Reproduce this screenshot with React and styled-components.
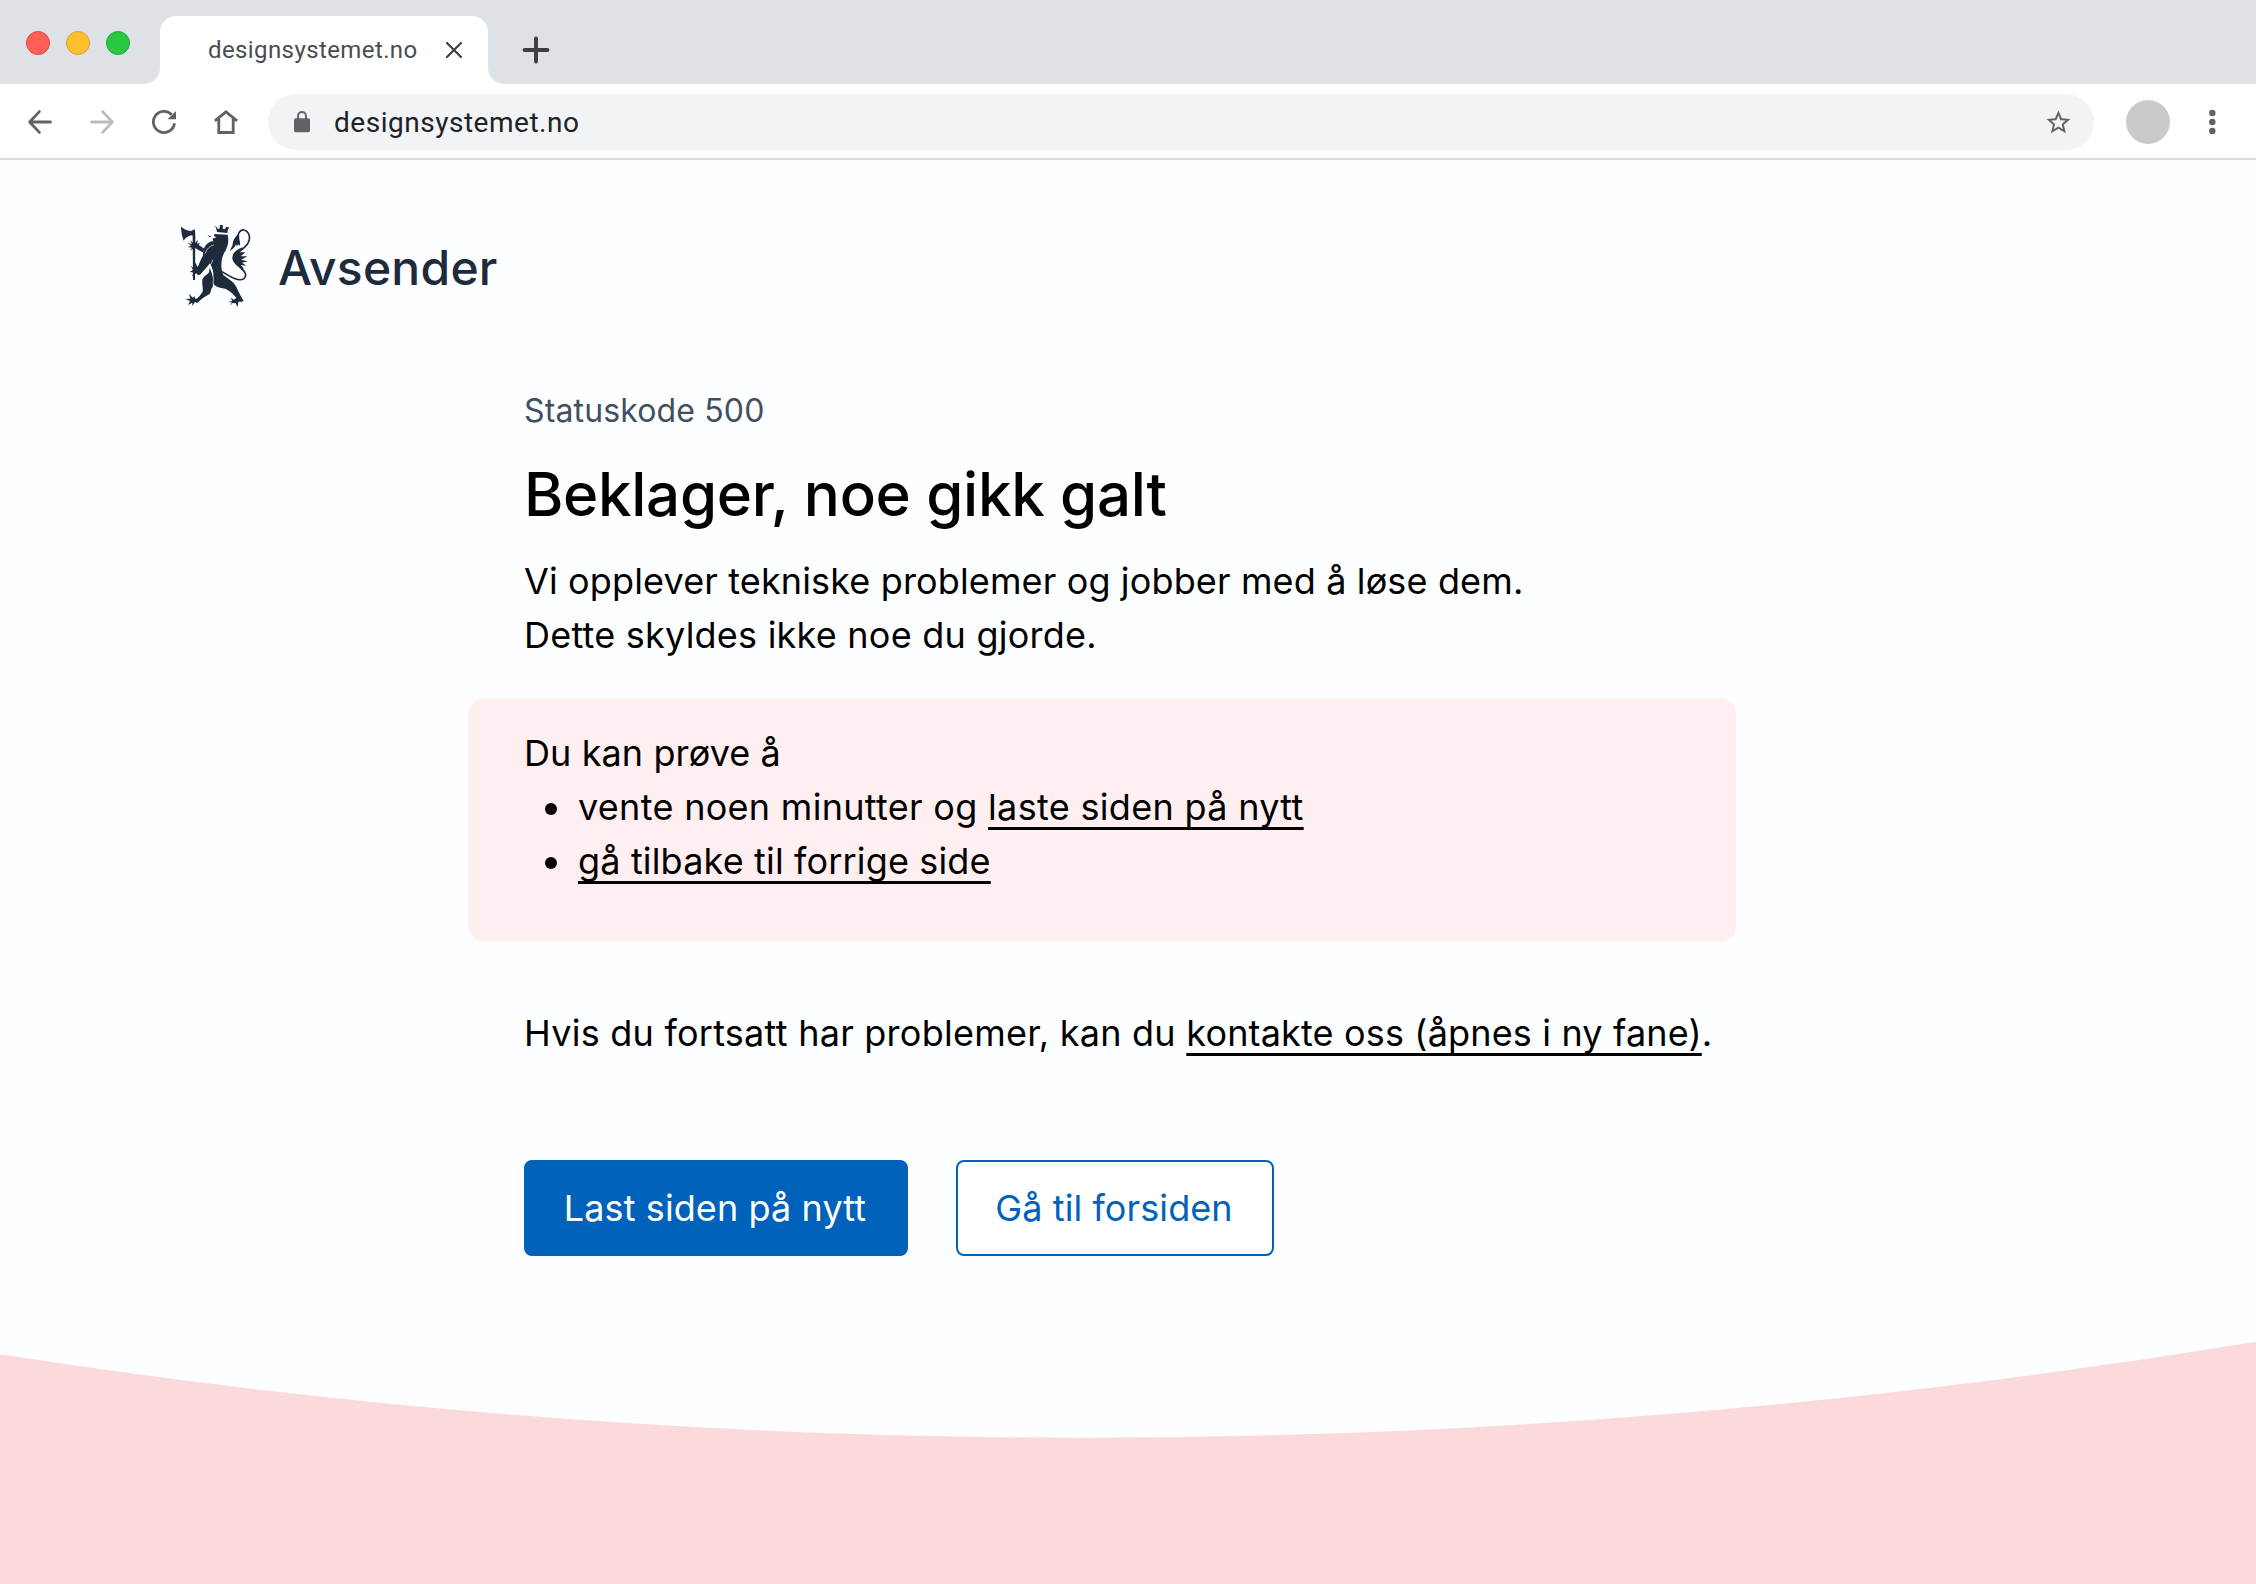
import React from 'react';
import styled, { createGlobalStyle } from 'styled-components';

const GlobalStyle = createGlobalStyle`
  *, *::before, *::after { box-sizing: border-box; }
  body { margin: 0; background: #fdfeff; }
`;

const Window = styled.div`
  display: flex;
  flex-direction: column;
  width: 2256px;
  height: 1584px;
  overflow: hidden;
  background: #fdfeff;
`;

const TabStrip = styled.div`
  display: flex;
  align-items: flex-end;
  height: 84px;
  background: #dee1e6;
`;

const WindowControls = styled.div`
  display: flex;
  gap: 16px;
  align-self: flex-start;
  width: 160px;
  padding: 31px 0 0 26px;
`;

const Control = styled.span`
  width: 24px;
  height: 24px;
  border: 1px solid ${(p) => p.$edge};
  border-radius: 50%;
  background: ${(p) => p.$fill};
`;

const Tab = styled.div`
  position: relative;
  display: flex;
  align-items: center;
  width: 328px;
  height: 68px;
  padding: 0 26px 2px 48px;
  border-radius: 16px 16px 0 0;
  background: #fff;

  &::before,
  &::after {
    content: '';
    position: absolute;
    bottom: 0;
    width: 16px;
    height: 16px;
  }
  &::before {
    right: 100%;
    background: radial-gradient(circle at 0 0, transparent 15.5px, #fff 16.5px);
  }
  &::after {
    left: 100%;
    background: radial-gradient(circle at 100% 0, transparent 15.5px, #fff 16.5px);
  }
`;

const TabTitle = styled.span`
  flex: 1;
  padding-top: 2px;
  font: 400 24px/32px Roboto, sans-serif;
  letter-spacing: 0.4px;
  color: #494c50;
`;

const NewTab = styled.div`
  display: flex;
  margin: 0 0 20px 34px;
`;

const Toolbar = styled.div`
  display: flex;
  align-items: center;
  height: 76px;
  padding: 2px 28px 0;
  border-bottom: 2px solid #dad9df;
  background: #fff;
`;

const NavButtons = styled.div`
  display: flex;
  gap: 38px;
  width: 240px;
`;

const Omnibox = styled.div`
  display: flex;
  align-items: center;
  width: 1826px;
  height: 56px;
  padding: 0 21.5px 0 25px;
  border-radius: 28px;
  background: #f1f3f4;
`;

const Address = styled.span`
  flex: 1;
  padding: 2px 0 0 23px;
  font: 400 28px/40px Roboto, sans-serif;
  letter-spacing: 0.52px;
  color: #202124;
`;

const Avatar = styled.span`
  width: 44px;
  height: 44px;
  margin: 0 38px 0 32px;
  border-radius: 50%;
  background: #cacaca;
`;

const Icon = styled.svg`
  display: block;
  flex: none;
  overflow: visible;
  fill: none;
  stroke: ${(p) => p.$color || '#5f6368'};
  stroke-width: ${(p) => p.$weight || 2.8};
`;

const SiteHeader = styled.header`
  display: flex;
  align-items: center;
  gap: 18px;
  padding: 55px 0 0 170px;
  color: #1e2b3c;
`;

const Crest = styled.svg`
  display: block;
  fill: #1e2b3c;
`;

const Sender = styled.span`
  padding-top: 5px;
  font: 500 48px/60px Inter, sans-serif;
  letter-spacing: 0.24px;
`;

const Main = styled.main`
  flex: 1;
  padding: 72px 0 0 524px;
  font: 400 36px/54px Inter, sans-serif;
  color: #000;
`;

const StatusCode = styled.p`
  margin: 0 0 20px;
  font-size: 32px;
  line-height: 48px;
  letter-spacing: 0.14px;
  color: #434f5f;
`;

const Title = styled.h1`
  margin: 0 0 21px;
  font-size: 60px;
  font-weight: 500;
  line-height: 78px;
  letter-spacing: -0.3px;
`;

const Text = styled.p`
  margin: 0;
  letter-spacing: ${(p) => p.$tracking || 0.16}px;
`;

const Card = styled.section`
  width: 1268px;
  height: 244px;
  margin: 36px 0 64px -56px;
  padding: 28px 56px;
  border-radius: 16px;
  background: #ffeff0;
`;

const Suggestions = styled.ul`
  margin: 0;
  padding: 0;
  list-style: none;
`;

const Suggestion = styled.li`
  display: flex;
  align-items: center;
  padding-left: 21px;
  letter-spacing: 0.3px;
  white-space: pre;

  &::before {
    content: '';
    width: 12px;
    height: 12px;
    margin: 3px 21px 0 0;
    border-radius: 50%;
    background: #000;
  }
`;

const Link = styled.a`
  color: inherit;
  letter-spacing: ${(p) => p.$tracking || 0.16}px;
  text-decoration: underline;
  text-decoration-thickness: 2.7px;
  text-underline-offset: 7px;
  text-decoration-skip-ink: none;
`;

const Actions = styled.div`
  display: flex;
  gap: 48px;
  margin-top: 100px;
`;

const Button = styled.button`
  width: ${(p) => p.$width}px;
  height: 96px;
  padding: 0 2px 0 0;
  border: 2px solid #0062ba;
  border-radius: 8px;
  background: ${(p) => (p.$primary ? '#0062ba' : '#fff')};
  color: ${(p) => (p.$primary ? '#fff' : '#0062ba')};
  font: inherit;
  letter-spacing: 0.1px;
`;

const Hill = styled.svg`
  display: block;
  flex: none;
  fill: #fcdadc;
`;

const Lion = () => (
  <Crest width="90" height="100" viewBox="0 0 270 300">
    <path d="M33 34C38 40 46 45 56 47L67 48V44L75 44 76 62 75 195H69L68 62 64 61C54 63 45 69 41 77 36 64 33 49 33 34Z" />
    <path d="M70 84 60 76 66 88 53 83 63 92 53 96 66 98 60 107 74 98 84 104 98 112 103 101 86 90 90 84 81 86 84 75 75 84Z" />
    <path d="M86 150C90 138 95 128 99 122 97 100 110 80 129 79L136 90 130 124C126 138 122 144 114 152 106 161 98 170 92 178L84 181 79 175 66 184 70 173 60 170 69 165 62 152 72 160 76 142 82 156Z" />
    <path d="M134 57 173 59C177 76 174 92 168 104 156 122 151 144 156 168L160 180C172 190 186 196 194 208 202 220 208 238 221 257L216 260 205 260 203 276 197 265 188 264 180 272 186 262 175 262 187 257 181 248 192 254 199 249C192 238 181 228 166 221 150 219 138 217 131 207 125 196 129 184 130 174 128 160 122 150 118 142L116 112 130 78 127 71 139 67 131 62Z" />
    <path d="M119 158 126 176C131 190 130 206 128 216 122 222 124 230 119 237 104 244 92 254 82 264L75 261 67 273 67 263 54 270 60 258 46 252 61 251 57 236 68 248 73 244 77 253C84 248 92 240 98 230 100 218 95 205 97 194 101 183 112 180 117 172Z" />
    <path d="M133 33 139 35 143 41 148 41 150 34 148 31 155 29 159 32 158 41 165 42 169 35 179 38 174 43 172 54 141 51 138 38Z" />
    <path d="M112 60 118 63 125 64 119 67Z" />
    <path d="M218 97C200 103 186 115 187 131 190 146 204 154 217 166L221 160 212 150 229 152 216 143 233 139 214 134 232 124 212 124 226 112 210 112Z" />
    <path d="M205 58C192 68 188 80 188 90L179 108C190 102 192 98 195 94L198 88 201 95 204 88 210 92C212 80 206 74 208 62Z" />
    <path
      d="M203 66C206 50 214 44 222 45 234 48 240 60 238 73 235 92 222 98 210 108M216 162C228 172 230 184 222 191 208 200 188 190 156 170"
      fill="none"
      stroke="#1e2b3c"
      strokeWidth="5"
    />
    <path
      d="M105 116C110 102 120 92 132 90M129 134C124 146 118 156 108 166M120 152C126 168 133 182 129 206"
      fill="none"
      stroke="#fdfeff"
      strokeWidth="2"
    />
  </Crest>
);

export default function App() {
  return (
    <Window>
      <GlobalStyle />
      <TabStrip>
        <WindowControls>
          <Control $fill="#ff5f57" $edge="#e2463f" />
          <Control $fill="#ffbf2f" $edge="#e0a028" />
          <Control $fill="#28c941" $edge="#1bac2c" />
        </WindowControls>
        <Tab>
          <TabTitle>designsystemet.no</TabTitle>
          <Icon width="16" height="16" $color="#3c4043" $weight={2.2}>
            <path d="M1 2 15 16M15 2 1 16" strokeLinecap="round" />
          </Icon>
        </Tab>
        <NewTab>
          <Icon width="28" height="28" $color="#3c4043" $weight={4}>
            <path d="M14 2.6V25.4M2.6 14H25.4" strokeLinecap="round" />
          </Icon>
        </NewTab>
      </TabStrip>
      <Toolbar>
        <NavButtons>
          <Icon width="24" height="24">
            <path d="M22.5 12H2.2M11.4 1.6 1.6 12 11.4 22.4" strokeLinecap="round" strokeLinejoin="round" />
          </Icon>
          <Icon width="24" height="24" $color="#babcbe">
            <path d="M1.5 12H21.8M12.6 1.6 22.4 12 12.6 22.4" strokeLinecap="round" strokeLinejoin="round" />
          </Icon>
          <Icon width="24" height="24">
            <path d="M19.8 4.8A10.6 10.6 0 1 0 22.5 13.3" />
            <path d="M24 1V9.3H15.7Z" fill="#5f6368" stroke="none" />
          </Icon>
          <Icon width="24" height="24">
            <path d="M.9 10.9 12 1.8 23.1 10.9M4.8 8.5V22.5H19.2V8.5" />
          </Icon>
        </NavButtons>
        <Omnibox>
          <Icon width="18" height="22">
            <rect x="1" y="7.2" width="16" height="14" rx="1.6" fill="#5f6368" stroke="none" />
            <path d="M5 8V5a4 4 0 0 1 8 0V8" strokeWidth="2" />
          </Icon>
          <Address>designsystemet.no</Address>
          <Icon width="28.8" height="28.8" viewBox="0 0 24 24">
            <path
              fill="#5f6368"
              stroke="none"
              d="M22 9.24l-7.19-.62L12 2 9.19 8.63 2 9.24l5.46 4.73L5.82 21 12 17.27 18.18 21l-1.63-7.03L22 9.24zM12 15.4l-3.76 2.27 1-4.28-3.32-2.88 4.38-.38L12 6.1l1.71 4.04 4.38.38-3.32 2.88 1 4.28L12 15.4z"
            />
          </Icon>
        </Omnibox>
        <Avatar />
        <Icon width="8" height="26">
          <g fill="#5f6368" stroke="none">
            <circle cx="4.3" cy="4" r="3.2" />
            <circle cx="4.3" cy="13" r="3.2" />
            <circle cx="4.3" cy="22" r="3.2" />
          </g>
        </Icon>
      </Toolbar>
      <SiteHeader>
        <Lion />
        <Sender>Avsender</Sender>
      </SiteHeader>
      <Main>
        <StatusCode>Statuskode 500</StatusCode>
        <Title>Beklager, noe gikk galt</Title>
        <Text $tracking={0.14}>Vi opplever tekniske problemer og jobber med å løse dem.</Text>
        <Text $tracking={0.23}>Dette skyldes ikke noe du gjorde.</Text>
        <Card>
          <Text $tracking={0.1}>Du kan prøve å</Text>
          <Suggestions>
            <Suggestion>
              <span>
                vente noen minutter og <Link $tracking={0.32}>laste siden på nytt</Link>
              </span>
            </Suggestion>
            <Suggestion>
              <Link>gå tilbake til forrige side</Link>
            </Suggestion>
          </Suggestions>
        </Card>
        <Text $tracking={0.25}>
          Hvis du fortsatt har problemer, kan du <Link>kontakte oss (åpnes i ny fane)</Link>.
        </Text>
        <Actions>
          <Button $primary $width={384}>Last siden på nytt</Button>
          <Button $width={318}>Gå til forsiden</Button>
        </Actions>
      </Main>
      <Hill width="2256" height="250" viewBox="0 0 2256 250">
        <path d="M0 20.3A7089 7089 0 0 0 1086 103.7 7178 7178 0 0 0 2256 7.7V250H0Z" />
      </Hill>
    </Window>
  );
}
